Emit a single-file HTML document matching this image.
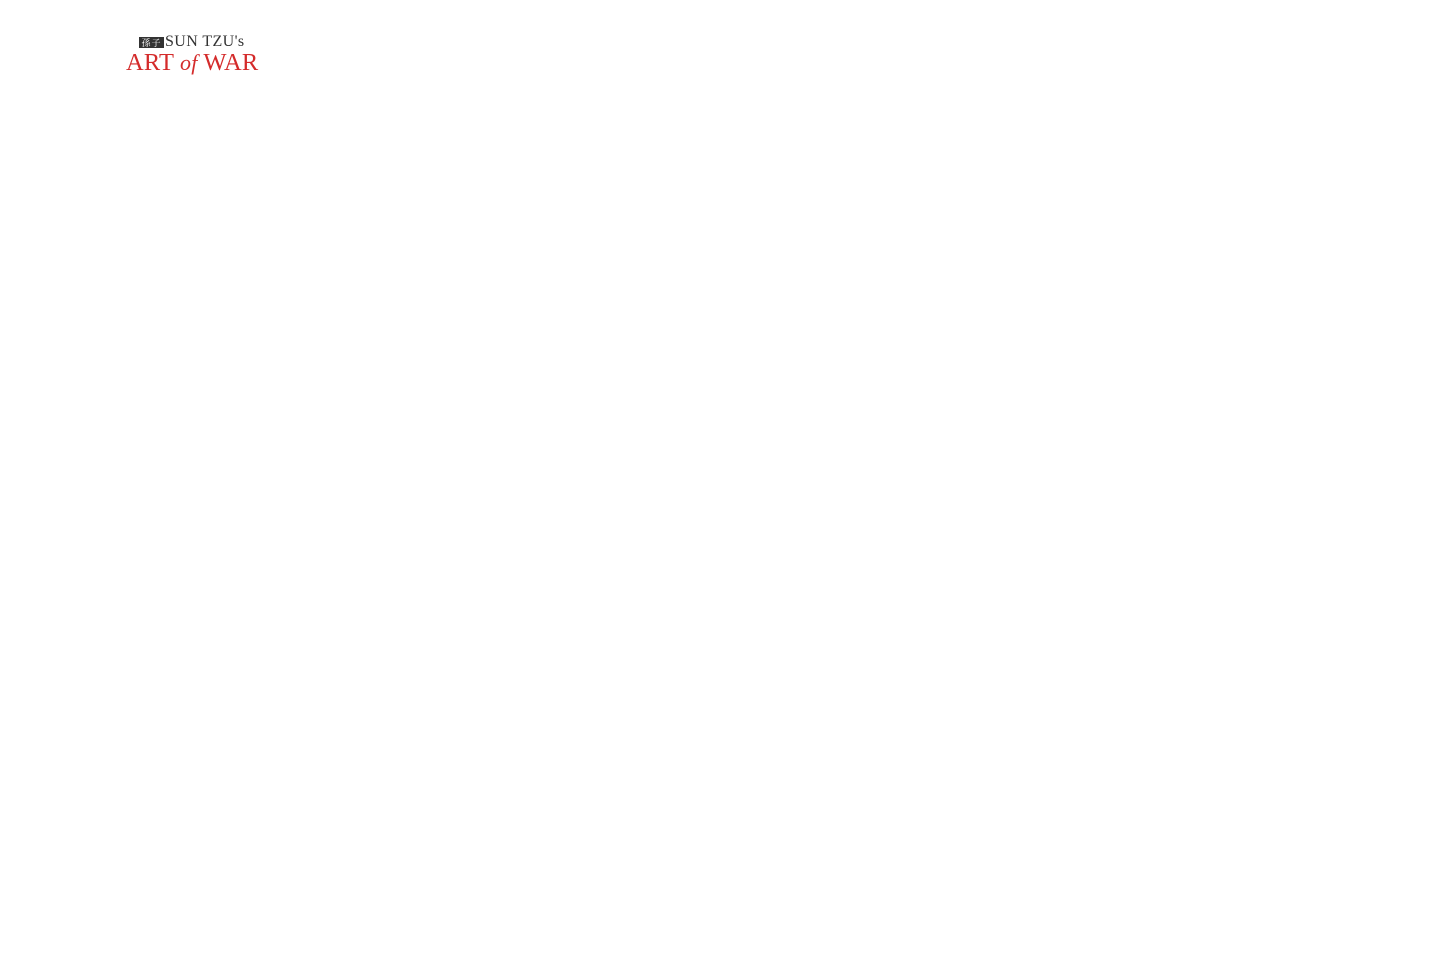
<!DOCTYPE html>
<html><head><meta charset="utf-8"><style>
html,body{margin:0;padding:0;background:#fff;width:1440px;height:961px;overflow:hidden}
.l1{position:absolute;left:139px;top:34px;height:16px;display:flex;align-items:center;font-family:"Liberation Serif",serif;color:#333;font-size:16px;line-height:16px;white-space:nowrap;letter-spacing:0.4px}
.box{background:#333;color:#fff;font-family:"Noto Serif CJK SC",serif;font-size:9px;line-height:11px;height:11px;width:25px;text-align:center;margin-right:1px;letter-spacing:1px}
.l2{position:absolute;left:126px;top:48px;font-family:"Liberation Serif",serif;color:#d42b2b;font-size:24.5px;line-height:30px;white-space:nowrap;letter-spacing:0.2px}
.l2 i{font-size:22px}
</style></head><body>
<div class="l1"><span class="box">孫子</span>SUN TZU's</div>
<div class="l2">ART <i>of</i> WAR</div>
</body></html>
